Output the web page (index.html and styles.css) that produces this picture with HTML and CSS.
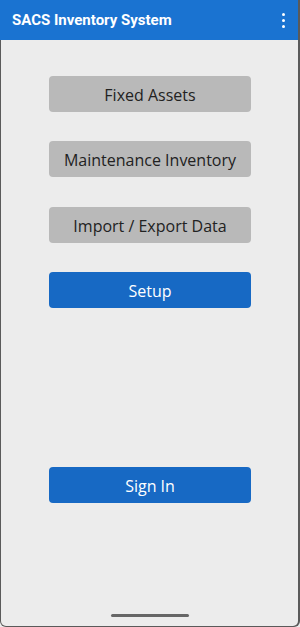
FILE: index.html
```html
<!DOCTYPE html>
<html>
<head>
<meta charset="utf-8">
<link rel="stylesheet" href="styles.css">
</head>
<body>
<div class="screen">
  <header class="appbar">
    <span class="title">SACS Inventory System</span>
    <span class="menu"><i></i><i></i><i></i></span>
  </header>
  <main class="content">
    <div class="btn gray">Fixed Assets</div>
    <div class="btn gray">Maintenance Inventory</div>
    <div class="btn gray">Import / Export Data</div>
    <div class="btn blue">Setup</div>
    <div class="btn blue signin">Sign In</div>
    <div class="spacer"></div>
    <div class="handle"></div>
  </main>
</div>
</body>
</html>
```
FILE: styles.css
```css
html, body {
  margin: 0;
  padding: 0;
  background: #ececec;
}
.screen {
  width: 300px;
  height: 627px;
  display: flex;
  flex-direction: column;
  box-sizing: border-box;
  overflow: hidden;
  border-bottom-left-radius: 6px;
  border-bottom-right-radius: 6px;
  background: #5a5a5a;
}
.appbar {
  height: 40px;
  flex: none;
  background: #1a73d1;
  display: flex;
  align-items: center;
  justify-content: space-between;
  padding: 0 13px 0 12px;
  margin-right: 2px;
  box-sizing: border-box;
}
.title {
  font-family: Roboto, "Liberation Sans", sans-serif;
  font-weight: 700;
  font-size: 15px;
  color: #ffffff;
}
.menu {
  display: flex;
  flex-direction: column;
  gap: 3px;
}
.menu i {
  width: 3px;
  height: 3px;
  background: #fff;
  border-radius: 50%;
  display: block;
}
.content {
  flex: 1;
  background: #ececec;
  margin: 0 2px 1px 1px;
  border-bottom-left-radius: 5px;
  border-bottom-right-radius: 5px;
  display: flex;
  flex-direction: column;
  align-items: center;
  padding-top: 36px;
  gap: 29px;
  font-family: "Open Sans", "Noto Sans", sans-serif;
}
.btn {
  width: 202px;
  height: 36px;
  margin-left: 1px;
  padding-top: 2px;
  border-radius: 4px;
  display: flex;
  align-items: center;
  justify-content: center;
  font-size: 16px;
  box-sizing: border-box;
}
.gray {
  background: #b9b9b9;
  color: #222222;
}
.blue {
  background: #1769c4;
  color: #ffffff;
}
.btn:nth-child(3) { margin-top: 1px; }
.signin {
  margin-top: 130px;
}
.spacer {
  flex: 1;
}
.handle {
  width: 78px;
  height: 3px;
  border-radius: 2px;
  background: #666666;
  margin-bottom: 9px;
  margin-top: -29px;
}
```
